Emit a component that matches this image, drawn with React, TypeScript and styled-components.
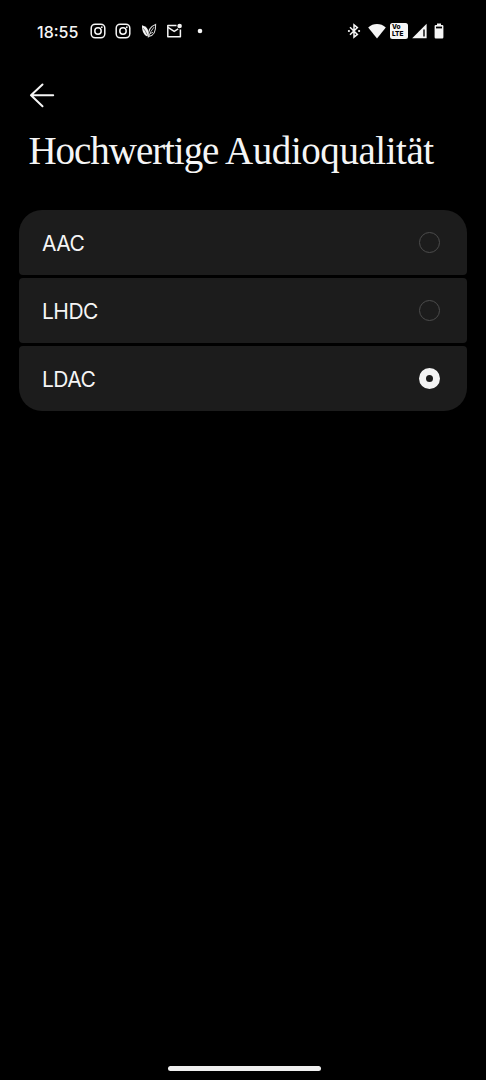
import React, { useState } from 'react';
import styled, { createGlobalStyle } from 'styled-components';

const GlobalStyle = createGlobalStyle`
  html, body { margin: 0; background: #000; }
  *, *::before, *::after { box-sizing: border-box; }
`;

const Screen = styled.main`
  display: flex;
  flex-direction: column;
  width: 486px;
  height: 1080px;
  overflow: hidden;
  background: #000;
  color: #f5f5f5;
  font-family: Inter, 'Liberation Sans', sans-serif;
`;

const StatusBar = styled.header`
  display: flex;
  align-items: center;
  justify-content: space-between;
  height: 62px;
  padding: 0 42px 0 37px;
`;

const StatusGroup = styled.div`
  display: flex;
  align-items: center;
`;

const Clock = styled.span`
  width: 53px;
  padding-top: 1px;
  font-size: 16px;
  line-height: 20px;
  font-weight: 500;
  letter-spacing: 0;
  white-space: nowrap;
`;

const StatusIcon = styled.svg<{ $gap?: number }>`
  display: block;
  flex: none;
  margin-left: ${({ $gap = 0 }) => $gap}px;
`;

const VolteBadge = styled.span`
  display: flex;
  flex-direction: column;
  justify-content: center;
  width: 18px;
  height: 16px;
  margin-left: 4px;
  padding-left: 2px;
  border-radius: 2.5px;
  background: #f5f5f5;
  color: #000;
  font-size: 6.5px;
  line-height: 7px;
  font-weight: 800;
`;

const BackButton = styled.button`
  display: flex;
  align-self: flex-start;
  margin: 20px 0 0 28px;
  padding: 0;
  border: 0;
  background: none;
  color: inherit;
`;

const Title = styled.h1`
  margin: 17px 0 0 28.5px;
  font-family: 'Liberation Serif', serif;
  font-size: 39px;
  line-height: 48px;
  font-weight: 400;
  white-space: nowrap;
`;

const TitleWord = styled.span<{ $tracking: number }>`
  letter-spacing: ${({ $tracking }) => $tracking}px;
  word-spacing: -2px;
`;

const OptionList = styled.div`
  display: flex;
  flex-direction: column;
  gap: 2.6px;
  margin: 34.5px 19px 0;
`;

const OptionRow = styled.button`
  display: flex;
  align-items: center;
  justify-content: space-between;
  height: 65.5px;
  padding: 2px 27px 0 23px;
  border: 0;
  border-radius: 4px;
  background: #1c1c1c;
  color: inherit;
  font: inherit;
  font-size: 21px;
  letter-spacing: -0.55px;

  &:first-child { border-radius: 23px 23px 4px 4px; }
  &:last-child { border-radius: 4px 4px 23px 23px; }
`;

const Radio = styled.span<{ $checked: boolean }>`
  width: 21.5px;
  height: 21.5px;
  margin-top: -2px;
  border-radius: 50%;
  border: ${({ $checked }) => ($checked ? '7.2px solid #f3f3f3' : '1px solid #4c4c4c')};
`;

const HomeIndicator = styled.div`
  width: 153px;
  height: 5px;
  margin: auto auto 9px 168px;
  border-radius: 3px;
  background: #f0f0f0;
`;

const InstagramIcon = ({ gap = 0 }: { gap?: number }) => (
  <StatusIcon $gap={gap} width="16" height="16" viewBox="0 0 16 16" fill="none" stroke="#f5f5f5">
    <rect x="1.2" y="1.2" width="13.6" height="13.6" rx="4" strokeWidth="1.5" />
    <circle cx="8" cy="8" r="3.2" strokeWidth="1.5" />
    <circle cx="11.8" cy="4.2" r="0.9" fill="#f5f5f5" stroke="none" />
  </StatusIcon>
);

const LeafIcon = () => (
  <StatusIcon $gap={9.5} width="16" height="16" viewBox="0 0 16 16">
    <path d="M1 2.2C4.8 3.2 7 5.4 7.2 8.2L6.7 13.6C2.8 12.2 1 8.3 1 2.2Z" fill="#f5f5f5" />
    <path d="M2.2 5.2Q4.9 8 5.8 11.4" fill="none" stroke="#000" strokeWidth="0.5" />
    <path d="M14.6 1.4C15 8.8 12.2 13 7.6 13.4C6.9 7.8 9.3 3.4 14.6 1.4Z" fill="none" stroke="#d8d8d8" strokeWidth="1.1" />
    <path d="M13 4.2Q9.4 8 7.2 14.6M8.8 10.8L12 9.2" fill="none" stroke="#d8d8d8" strokeWidth="0.9" />
  </StatusIcon>
);

const MailIcon = () => (
  <StatusIcon $gap={9} width="17" height="16" viewBox="0 0 17 16">
    <path d="M10.5 2.6H1.8V13.7H14.4V6.4" fill="none" stroke="#f5f5f5" strokeWidth="1.5" strokeLinejoin="round" />
    <path d="M2 4.4L8.2 8.4L12.2 5.9" fill="none" stroke="#f5f5f5" strokeWidth="1.5" />
    <circle cx="13.6" cy="3" r="2.3" fill="#f5f5f5" />
  </StatusIcon>
);

const BluetoothIcon = () => (
  <StatusIcon width="14" height="16" viewBox="0 0 14 16">
    <path d="M3 4.3L10.4 11.4L7 14.2V1.8L10.4 4.6L3 11.7" fill="none" stroke="#f5f5f5" strokeWidth="1.5" />
    <circle cx="1.9" cy="8" r="1.1" fill="#f5f5f5" />
    <circle cx="12.1" cy="8" r="1.1" fill="#f5f5f5" />
  </StatusIcon>
);

const WifiIcon = () => (
  <StatusIcon $gap={7} width="18" height="16" viewBox="0 0 18 16">
    <path d="M0.2 4.4C5.2 -0.2 12.8 -0.2 17.8 4.4L9 15.4Z" fill="#f5f5f5" />
  </StatusIcon>
);

const SignalIcon = () => (
  <StatusIcon $gap={4} width="15" height="16" viewBox="0 0 15 16">
    <path d="M14.6 0.8V15.2H0.2Z" fill="#f5f5f5" />
    <path d="M12 6.5V13.6" stroke="#000" strokeWidth="1.4" />
  </StatusIcon>
);

const BatteryIcon = () => (
  <StatusIcon $gap={7} width="10" height="16" viewBox="0 0 10 16">
    <path d="M3 0.6H7V2H8.2Q9.4 2 9.4 3.1V14.2Q9.4 15.4 8.2 15.4H1.8Q0.6 15.4 0.6 14.2V3.1Q0.6 2 1.8 2H3Z" fill="#f5f5f5" />
    <path d="M2 3.6H8V5.4H2Z" fill="#000" />
  </StatusIcon>
);

const codecs = ['AAC', 'LHDC', 'LDAC'];

export default function App() {
  const [selected, setSelected] = useState('LDAC');

  return (
    <Screen>
      <GlobalStyle />
      <StatusBar>
        <StatusGroup>
          <Clock>18:55</Clock>
          <InstagramIcon />
          <InstagramIcon gap={9.4} />
          <LeafIcon />
          <MailIcon />
          <StatusIcon $gap={14.6} width="6" height="6" viewBox="0 0 6 6">
            <circle cx="3" cy="3" r="2.3" fill="#f5f5f5" />
          </StatusIcon>
        </StatusGroup>
        <StatusGroup>
          <BluetoothIcon />
          <WifiIcon />
          <VolteBadge>
            <span>Vo</span>
            <span>LTE</span>
          </VolteBadge>
          <SignalIcon />
          <BatteryIcon />
        </StatusGroup>
      </StatusBar>
      <BackButton aria-label="Zurück">
        <svg width="28" height="28" viewBox="0 0 28 28" fill="none" stroke="#f5f5f5" strokeWidth="2" strokeLinecap="round" strokeLinejoin="round">
          <path d="M25.2 13.3H3M14.5 2.5L3 13.3L14.5 24.3" />
        </svg>
      </BackButton>
      <Title>
        <TitleWord $tracking={-1.05}>Hochwertige </TitleWord>
        <TitleWord $tracking={-0.45}>Audioqualität</TitleWord>
      </Title>
      <OptionList role="radiogroup">
        {codecs.map((codec) => (
          <OptionRow key={codec} role="radio" aria-checked={codec === selected} onClick={() => setSelected(codec)}>
            {codec}
            <Radio $checked={codec === selected} />
          </OptionRow>
        ))}
      </OptionList>
      <HomeIndicator />
    </Screen>
  );
}
